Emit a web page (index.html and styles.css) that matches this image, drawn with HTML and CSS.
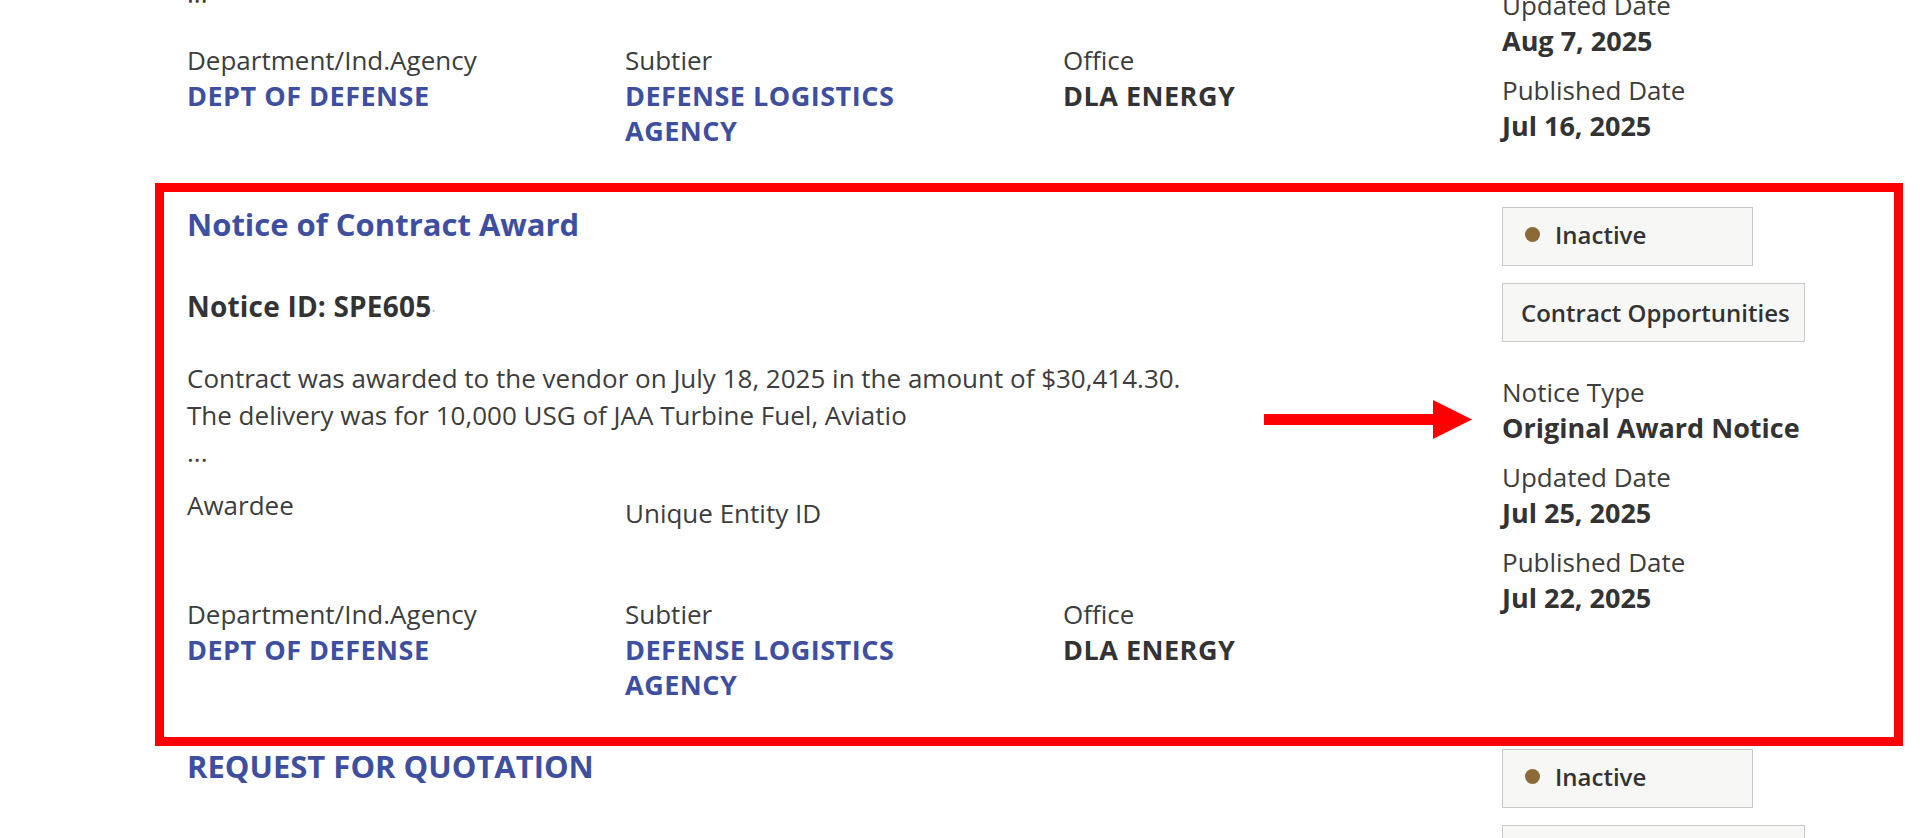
FILE: index.html
```html
<!DOCTYPE html>
<html lang="en">
<head>
  <meta charset="UTF-8" />
  <meta name="viewport" content="width=device-width, initial-scale=1.0" />
  <title>Contract Opportunities - Search Results</title>
  <link rel="stylesheet" href="styles.css">
</head>
<body>
  <div class="results">

    <!-- tail of the previous result, scrolled past its title -->
    <div class="result result-tail">
      <div class="result-main">
        <p class="description">...</p>
        <div class="fields">
          <div class="field">
            <span class="field-label">Department/Ind.Agency</span>
            <a class="field-link" href="#">DEPT OF DEFENSE</a>
          </div>
          <div class="field">
            <span class="field-label">Subtier</span>
            <a class="field-link" href="#">DEFENSE LOGISTICS AGENCY</a>
          </div>
          <div class="field">
            <span class="field-label">Office</span>
            <span class="field-value">DLA ENERGY</span>
          </div>
        </div>
      </div>
      <div class="result-side">
        <div class="meta">
          <div class="meta-item">
            <span class="meta-label">Updated Date</span>
            <span class="meta-value">Aug 7, 2025</span>
          </div>
          <div class="meta-item">
            <span class="meta-label">Published Date</span>
            <span class="meta-value">Jul 16, 2025</span>
          </div>
        </div>
      </div>
    </div>

    <div class="result result-highlight">
      <div class="result-main">
        <a class="result-title" href="#">Notice of Contract Award</a>
        <h3 class="notice-id">Notice ID: SPE605<span class="redacted">&middot;</span></h3>
        <p class="description">
          Contract was awarded to the vendor on July 18, 2025 in the amount of $30,414.30.<br>
          The delivery was for 10,000 USG of JAA Turbine Fuel, Aviatio<br>
          ...
        </p>
        <div class="fields fields-awardee">
          <div class="field">
            <span class="field-label">Awardee</span>
          </div>
          <div class="field field-uei">
            <span class="field-label">Unique Entity ID</span>
          </div>
        </div>
        <div class="fields">
          <div class="field">
            <span class="field-label">Department/Ind.Agency</span>
            <a class="field-link" href="#">DEPT OF DEFENSE</a>
          </div>
          <div class="field">
            <span class="field-label">Subtier</span>
            <a class="field-link" href="#">DEFENSE LOGISTICS AGENCY</a>
          </div>
          <div class="field">
            <span class="field-label">Office</span>
            <span class="field-value">DLA ENERGY</span>
          </div>
        </div>
      </div>
      <div class="result-side">
        <div class="status"><span class="status-dot"></span>Inactive</div>
        <div class="tag">Contract Opportunities</div>
        <div class="meta">
          <div class="meta-item">
            <span class="meta-label">Notice Type</span>
            <span class="meta-value">Original Award Notice</span>
          </div>
          <div class="meta-item">
            <span class="meta-label">Updated Date</span>
            <span class="meta-value">Jul 25, 2025</span>
          </div>
          <div class="meta-item">
            <span class="meta-label">Published Date</span>
            <span class="meta-value">Jul 22, 2025</span>
          </div>
        </div>
      </div>
      <svg class="pointer" width="212" height="43" viewBox="0 0 212 43">
        <rect x="2" y="16" width="171" height="11" fill="#ff0000"></rect>
        <polygon points="171,2 210,21.5 171,41" fill="#ff0000"></polygon>
      </svg>
    </div>

    <div class="result">
      <div class="result-main">
        <a class="result-title" href="#">REQUEST FOR QUOTATION</a>
      </div>
      <div class="result-side">
        <div class="status"><span class="status-dot"></span>Inactive</div>
        <div class="tag">Contract Opportunities</div>
      </div>
    </div>

  </div>
</body>
</html>
```

FILE: styles.css
```css
:root {
  --text-color: #3d3d3d;
  --strong-color: #333333;
  --link-color: #3e4f9f;
  --tag-bg: #f7f7f5;
  --tag-border: #c9c9c9;
  --inactive-dot: #8c6a38;
  --marker: #ff0000;
}

html,
body {
  overflow: hidden;
}

body {
  margin: 0;
  background-color: #ffffff;
  color: var(--text-color);
  font-family: 'Open Sans', 'Liberation Sans', sans-serif;
  font-size: 26px;
  line-height: 35px;
}

.results {
  width: 1730px;
  margin: -37px 0 0 164px;
}

.result {
  position: relative;
  display: flex;
  padding: 12px 0 35px 23px;
}

.result-tail {
  padding-bottom: 44px;
}

/* red frame around the result being pointed at */
.result-highlight {
  outline: 9px solid var(--marker);
  margin-bottom: -3px;
}

.result-main {
  width: 1315px;
  flex-shrink: 0;
}

.result-side {
  flex: 1;
  display: flex;
  flex-direction: column;
  align-items: flex-start;
  padding-top: 3px;
}

.result-tail .result-side {
  padding-top: 13px;
}

.result-title {
  display: block;
  font-size: 31px;
  line-height: 40px;
  font-weight: 700;
  color: var(--link-color);
  text-decoration: none;
}

.notice-id {
  margin: 45px 0 0;
  font-size: 28px;
  line-height: 35px;
  font-weight: 700;
  letter-spacing: 0.2px;
  color: var(--strong-color);
}

.redacted {
  color: #b5b5b5;
  font-weight: 400;
  font-size: 16px;
}

.description {
  margin: 31px 0 0;
  line-height: 37px;
}

.result-tail .description {
  margin-top: 0;
}

.fields {
  display: grid;
  grid-template-columns: repeat(3, 438px);
  margin-top: 39px;
}

.result-tail .fields {
  margin-top: 31px;
}

.fields-awardee {
  margin-top: 17px;
  min-height: 70px;
}

.field {
  display: flex;
  flex-direction: column;
  align-items: flex-start;
  padding-right: 100px;
}

.field-uei {
  padding-top: 8px;
}

.field-link,
.field-value {
  font-size: 27px;
  font-weight: 700;
  letter-spacing: 0.5px;
  text-decoration: none;
}

.field-link {
  color: var(--link-color);
}

.field-value {
  color: var(--strong-color);
}

.status,
.tag {
  box-sizing: border-box;
  height: 59px;
  border: 1px solid var(--tag-border);
  background-color: var(--tag-bg);
  color: var(--strong-color);
  font-size: 24px;
  font-weight: 600;
  line-height: 57px;
}

.status {
  display: flex;
  align-items: center;
  width: 251px;
  padding: 0 0 4px 22px;
}

.status-dot {
  width: 15px;
  height: 15px;
  margin-right: 15px;
  border-radius: 50%;
  background-color: var(--inactive-dot);
}

.tag {
  margin-top: 17px;
  padding: 0 14px 0 18px;
}

.meta {
  margin-top: 33px;
}

.result-tail .meta {
  margin-top: 0;
}

.meta-item + .meta-item {
  margin-top: 15px;
}

.meta-label,
.meta-value {
  display: block;
}

.meta-value {
  font-size: 27px;
  font-weight: 700;
  color: var(--strong-color);
}

.pointer {
  position: absolute;
  left: 1098px;
  top: 206px;
}
```
